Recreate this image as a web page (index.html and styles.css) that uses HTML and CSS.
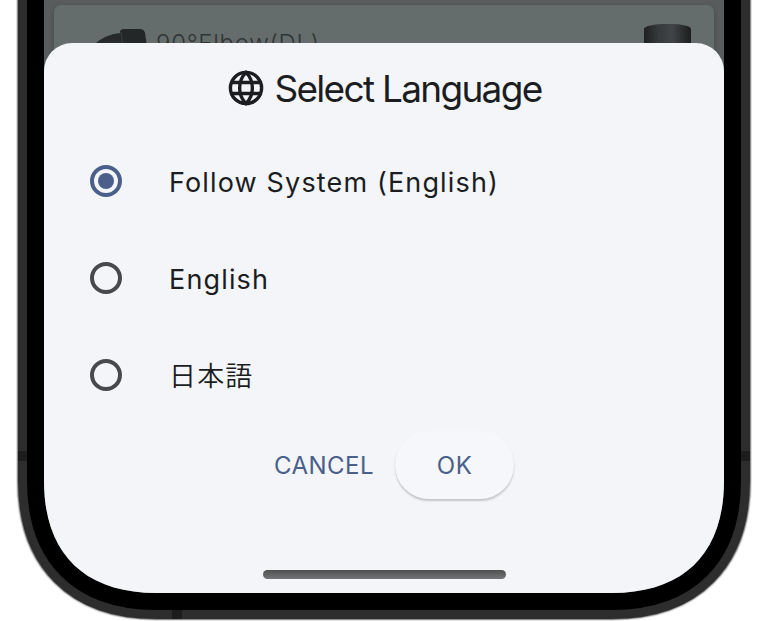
FILE: index.html
```
<!DOCTYPE html>
<html lang="en">
<head>
    <meta charset="UTF-8">
    <meta name="viewport" content="width=device-width, initial-scale=1.0">
    <title>Select Language</title>
    <link rel="stylesheet" href="styles.css">
</head>
<body>
    <div class="phone">
        <svg class="phone-body" viewBox="0 0 765 621" fill="#000">
            <defs>
                <path id="outline" d="M44 -60V481C44 553 84 593 156 593H612C684 593 724 553 724 481V-60Z"/>
            </defs>
            <use href="#outline" stroke="#dedede" stroke-width="56"/>
            <use href="#outline" stroke="#8c8c8c" stroke-width="54"/>
            <use href="#outline" stroke="#2d2d2d" stroke-width="52"/>
            <path fill="#1d1d1d" d="M18 451h9v10h-9zM741 451h9v10h-9zM172 610h10v9h-10z"/>
            <use href="#outline" stroke="#000" stroke-width="34"/>
        </svg>

        <div class="screen">
            <div class="part-card">
                <svg class="elbow" width="54" height="44" viewBox="0 0 54 44">
                    <defs>
                        <linearGradient id="elbowShade" x1="0" y1="0" x2="0" y2="1">
                            <stop offset="0" stop-color="#252829"/>
                            <stop offset="1" stop-color="#313536"/>
                        </linearGradient>
                    </defs>
                    <path fill="url(#elbowShade)" d="M0 16C7 9 15 5 27 4L31 30L0 44Z"/>
                    <path fill="#232728" d="M26 2Q27 0 30 0H46Q50 0 51 4L54 24H30Z"/>
                    <path fill="none" stroke="#393e3f" d="M27 3L30 22"/>
                </svg>
                <span class="part-name">90°Elbow(DL)</span>
                <svg class="pipe" width="48" height="44" viewBox="0 0 48 44">
                    <defs>
                        <linearGradient id="pipeShade">
                            <stop offset="0" stop-color="#1e2021"/>
                            <stop offset=".3" stop-color="#36393b"/>
                            <stop offset=".6" stop-color="#414446"/>
                            <stop offset="1" stop-color="#1b1d1e"/>
                        </linearGradient>
                    </defs>
                    <path fill="url(#pipeShade)" d="M0 5C0 2 10 0 24 0S47 2 47 5V44H0Z"/>
                </svg>
            </div>

            <div class="sheet">
                <h1 class="title">
                    <svg class="globe" width="36" height="36" viewBox="0 0 36 36" fill="none" stroke="#1b1d21" stroke-width="3.4">
                        <circle cx="18" cy="18" r="15.6"/>
                        <path d="M3 12.5H33M3 23.5H33"/>
                        <path d="M18 2.4C9.500 11 9.500 25 18 33.600C26.500 25 26.500 11 18 2.400Z"/>
                    </svg>
                    <span class="title-text">Select Language</span>
                </h1>

                <div class="options">
                    <div class="option">
                        <span class="radio selected"></span>
                        <span class="option-label">Follow System (English)</span>
                    </div>
                    <div class="option">
                        <span class="radio"></span>
                        <span class="option-label">English</span>
                    </div>
                    <div class="option">
                        <span class="radio"></span>
                        <span class="option-label japanese" lang="ja">日本語</span>
                    </div>
                </div>

                <div class="actions">
                    <button class="btn">CANCEL</button>
                    <button class="btn btn-ok">OK</button>
                </div>

                <div class="home-bar"></div>
            </div>
        </div>
    </div>
</body>
</html>
```

FILE: styles.css
```
* {
    box-sizing: border-box;
    margin: 0;
    padding: 0;
}

body {
    background: #fff;
    font-family: Inter, "Noto Sans CJK JP", sans-serif;
    color: #1b1d21;
    overflow: hidden;
}

.phone {
    position: relative;
    width: 765px;
    height: 621px;
    padding-left: 44px;
    overflow: hidden;
}

.phone-body {
    position: absolute;
    top: 0;
    left: 0;
    width: 765px;
    height: 621px;
}

.screen {
    position: relative;
    width: 680px;
    height: 593px;
    padding: 5px 10px 0;
    background: #585c5d;
    clip-path: path("M0 0V481C0 553 40 593 112 593H568C640 593 680 553 680 481V0Z");
}

.part-card {
    display: flex;
    align-items: flex-start;
    height: 80px;
    padding: 0 22px 0 40px;
    background: #656d6c;
    border-radius: 7px;
    box-shadow: 0 2px 5px rgba(0, 0, 0, 0.25);
}

.elbow {
    margin-top: 24px;
}

.part-name {
    margin: 23px auto 0 8px;
    font-size: 24px;
    font-weight: 300;
    line-height: 32px;
    letter-spacing: 0.7px;
    color: #303435;
}

.pipe {
    margin-top: 19px;
}

.sheet {
    position: absolute;
    top: 43px;
    left: 0;
    display: flex;
    flex-direction: column;
    align-items: center;
    width: 680px;
    height: 550px;
    padding-top: 21px;
    background: #f3f5f9;
    border-radius: 28px 28px 0 0;
}

.title {
    display: flex;
    align-items: center;
    gap: 10px;
    height: 48px;
    margin-left: 2px;
    font-size: 37px;
    font-weight: 400;
    line-height: 48px;
}

.title-text {
    padding-top: 2px;
    letter-spacing: -1.7px;
    white-space: nowrap;
}

.options {
    width: 100%;
    margin-top: 20px;
    padding-left: 46px;
}

.option {
    display: flex;
    align-items: center;
    gap: 47px;
    height: 97px;
}

.radio {
    display: flex;
    width: 32px;
    height: 32px;
    border: 4px solid #48494d;
    border-radius: 50%;
}

.radio.selected {
    border-color: #4a608a;
}

.radio.selected::after {
    content: "";
    width: 16px;
    height: 16px;
    margin: auto;
    border-radius: 50%;
    background: #4a608a;
}

.option-label {
    padding-top: 4px;
    font-size: 27px;
    font-weight: 400;
    line-height: 40px;
    letter-spacing: 1.15px;
    white-space: nowrap;
}

.japanese {
    padding-top: 0;
    font-family: "Noto Sans CJK JP", sans-serif;
    font-weight: 350;
}

.actions {
    display: flex;
    gap: 8px;
    margin-top: 8px;
    margin-left: 7px;
}

.btn {
    height: 68px;
    padding: 0 13px;
    border: none;
    border-radius: 34px;
    background: transparent;
    color: #4a608a;
    font-family: inherit;
    font-size: 24px;
    font-weight: 400;
    letter-spacing: 0.5px;
    cursor: pointer;
}

.btn-ok {
    width: 119px;
    background: #f5f7fb;
    box-shadow: 0 2px 2px rgba(0, 0, 0, 0.2);
}

.home-bar {
    width: 243px;
    height: 9px;
    margin-top: auto;
    margin-bottom: 14px;
    border-radius: 5px;
    background: linear-gradient(#4d5051, #737477);
}
```
